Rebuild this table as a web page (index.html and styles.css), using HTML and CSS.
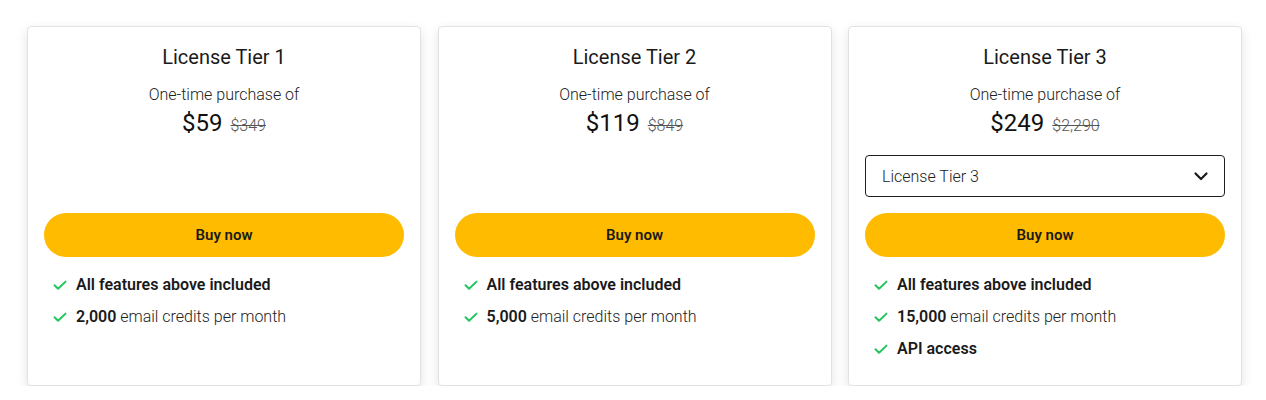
FILE: index.html
```html
<!DOCTYPE html>
<html lang="en">
<head>
<meta charset="utf-8">
<title>License Tiers</title>
<link rel="stylesheet" href="styles.css">
</head>
<body>
<div class="pricing">
  <div class="card">
    <h2 class="title">License Tier 1</h2>
    <p class="sub">One-time purchase of</p>
    <p class="price"><span class="now">$59</span><s class="was">$349</s></p>
    <div class="slot"></div>
    <button class="buy">Buy now</button>
    <ul class="features">
      <li><svg class="check" viewBox="0 0 16 16"><path d="M2.5 8.2l3.6 3.6L13.5 4.6"/></svg><span><b>All features above included</b></span></li>
      <li><svg class="check" viewBox="0 0 16 16"><path d="M2.5 8.2l3.6 3.6L13.5 4.6"/></svg><span><b>2,000</b> email credits per month</span></li>
    </ul>
  </div>
  <div class="card">
    <h2 class="title">License Tier 2</h2>
    <p class="sub">One-time purchase of</p>
    <p class="price"><span class="now">$119</span><s class="was">$849</s></p>
    <div class="slot"></div>
    <button class="buy">Buy now</button>
    <ul class="features">
      <li><svg class="check" viewBox="0 0 16 16"><path d="M2.5 8.2l3.6 3.6L13.5 4.6"/></svg><span><b>All features above included</b></span></li>
      <li><svg class="check" viewBox="0 0 16 16"><path d="M2.5 8.2l3.6 3.6L13.5 4.6"/></svg><span><b>5,000</b> email credits per month</span></li>
    </ul>
  </div>
  <div class="card">
    <h2 class="title">License Tier 3</h2>
    <p class="sub">One-time purchase of</p>
    <p class="price"><span class="now">$249</span><s class="was">$2,290</s></p>
    <div class="slot select">
      <span>License Tier 3</span>
      <svg class="chev" viewBox="0 0 16 16"><path d="M2.5 5.5l5.5 5.5 5.5-5.5"/></svg>
    </div>
    <button class="buy">Buy now</button>
    <ul class="features">
      <li><svg class="check" viewBox="0 0 16 16"><path d="M2.5 8.2l3.6 3.6L13.5 4.6"/></svg><span><b>All features above included</b></span></li>
      <li><svg class="check" viewBox="0 0 16 16"><path d="M2.5 8.2l3.6 3.6L13.5 4.6"/></svg><span><b>15,000</b> email credits per month</span></li>
      <li><svg class="check" viewBox="0 0 16 16"><path d="M2.5 8.2l3.6 3.6L13.5 4.6"/></svg><span><b>API access</b></span></li>
    </ul>
  </div>
</div>
</body>
</html>
```

FILE: styles.css
```css
* { box-sizing: border-box; }
html, body { margin: 0; padding: 0; background: #ffffff; }
body {
  font-family: Roboto, "Liberation Sans", Arial, sans-serif;
  color: #1f1f1f;
}
.pricing {
  display: grid;
  grid-template-columns: repeat(3, 394px);
  column-gap: 16.5px;
  padding: 26px 0 0 27px;
  align-items: stretch;
}
.card {
  background: #fff;
  border: 1px solid #e2e2e2;
  border-radius: 4px;
  box-shadow: 0 4px 12px rgba(0,0,0,0.11);
  padding: 16px 16px 24px;
  display: flex;
  flex-direction: column;
}
.card > * { flex-shrink: 0; }
.title {
  margin: 0;
  font-size: 20px;
  line-height: 28px;
  font-weight: 400;
  text-align: center;
  color: #1a1a1a;
}
.sub {
  margin: 12px 0 0;
  font-size: 16px;
  line-height: 24px;
  font-weight: 300;
  text-align: center;
  color: #222;
}
.price {
  margin: 0;
  height: 32px;
  display: flex;
  justify-content: center;
  align-items: baseline;
  gap: 8px;
}
.now {
  font-size: 24px;
  line-height: 32px;
  font-weight: 400;
  color: #111;
}
.was {
  font-size: 16px;
  line-height: 32px;
  font-weight: 300;
  color: #555;
}
.slot {
  height: 42px;
  margin-top: 16px;
}
.select {
  border: 1px solid #1e1e1e;
  border-radius: 4px;
  display: flex;
  align-items: center;
  justify-content: space-between;
  padding: 0 15px 0 16px;
  font-size: 16px;
  font-weight: 300;
  color: #222;
}
.chev {
  width: 16px;
  height: 16px;
  fill: none;
  stroke: #1a1a1a;
  stroke-width: 2.2;
  stroke-linecap: round;
  stroke-linejoin: round;
}
.buy {
  margin-top: 16px;
  height: 44px;
  border: 0;
  border-radius: 22px;
  background: #ffbb00;
  font-family: inherit;
  font-size: 15px;
  font-weight: 600;
  color: #1a1a1a;
  cursor: pointer;
}
.features {
  list-style: none;
  margin: 16px 0 0;
  padding: 0 0 0 8px;
  display: flex;
  flex-direction: column;
  gap: 8px;
}
.features li {
  display: flex;
  align-items: center;
  gap: 8px;
  font-size: 16px;
  line-height: 24px;
  font-weight: 300;
  color: #222;
}
.features b { font-weight: 600; color: #1a1a1a; }
.check {
  width: 16px;
  height: 16px;
  flex: none;
  fill: none;
  stroke: #22c55e;
  stroke-width: 2;
  stroke-linecap: round;
  stroke-linejoin: round;
}
```
